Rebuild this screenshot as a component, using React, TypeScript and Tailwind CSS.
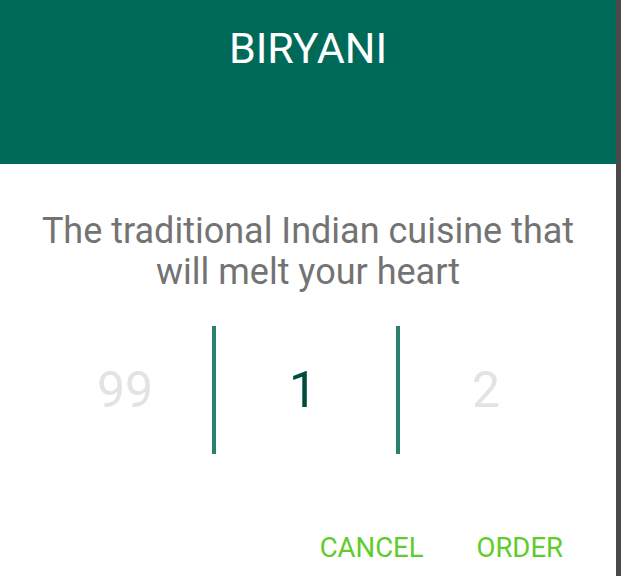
export default function App() {
    const font = { fontFamily: "Roboto, 'Noto Sans', sans-serif" };

    return (
        <div className="flex w-[621px] h-[576px] overflow-hidden bg-white" style={font}>
            <div className="w-[616px] flex flex-col bg-white">
                {/* header */}
                <div className="h-[164px] bg-[#006a59] flex justify-center pt-[27px]">
                    <h1 className="text-[43px] leading-[43px] text-white font-normal">BIRYANI</h1>
                </div>

                {/* description */}
                <p className="mt-[47px] px-[20px] text-center text-[36px] leading-[41px] text-[#737373]">
                    The traditional Indian cuisine that will melt your heart
                </p>

                {/* number picker */}
                <div className="mt-[33px] h-[128px] flex pl-[32px]">
                    <div className="w-[180px] pl-[6px] flex items-center justify-center text-[50px] text-[#e3e3e3]">99</div>
                    <div className="w-[4px] bg-[#2c7f6f]" />
                    <div className="w-[180px] pr-[6px] flex items-center justify-center text-[50px] text-[#004d3d]">1</div>
                    <div className="w-[4px] bg-[#2c7f6f]" />
                    <div className="w-[180px] pr-[8px] flex items-center justify-center text-[50px] text-[#e3e3e3]">2</div>
                </div>

                {/* actions */}
                <div className="mt-[78px] flex justify-end gap-[53px] pr-[53px]">
                    <button className="text-[27.5px] leading-[32px] text-[#5fcb2c]">CANCEL</button>
                    <button className="text-[27.5px] leading-[32px] text-[#5fcb2c]">ORDER</button>
                </div>
            </div>
            <div className="w-[5px] bg-[#4a4a4a]" />
        </div>
    )
}
